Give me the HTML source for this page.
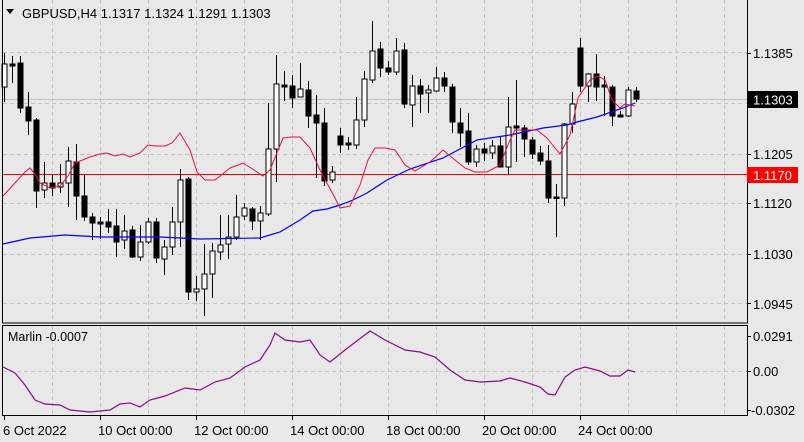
<!DOCTYPE html>
<html><head><meta charset="utf-8"><style>
html,body{margin:0;padding:0;background:#e8e8e8;}
body{width:804px;height:442px;overflow:hidden;position:relative;font-family:"Liberation Sans",sans-serif;}
svg{position:absolute;left:0;top:0}
</style></head><body>
<svg id="s" width="804" height="442" xmlns="http://www.w3.org/2000/svg" font-family="Liberation Sans, sans-serif" font-size="13">
<rect x="0" y="0" width="804" height="442" fill="#e8e8e8"/>
<g id="grid" stroke="#c4c4c4" stroke-dasharray="4,3" stroke-width="1"></g>
<line x1="2" y1="99.5" x2="747" y2="99.5" stroke="#c0c0c0"/>
<line x1="2" y1="174.5" x2="747" y2="174.5" stroke="#ff0000"/>
<g id="cd"></g>
<polyline id="blue" fill="none" stroke="#0000ff" stroke-width="1.2"/>
<polyline id="red" fill="none" stroke="#e8103c" stroke-width="1"/>
<polyline id="mar" fill="none" stroke="#8b0a8b" stroke-width="1.2"/>
<rect x="2.5" y="-1" width="745" height="324" fill="none" stroke="#000"/>
<rect x="2.5" y="325.5" width="745" height="90" fill="none" stroke="#000"/>
<path d="M6 9 L14 9 L10 14 Z" fill="#000"/>
<text x="22" y="18" fill="#000">GBPUSD,H4  1.1317 1.1324 1.1291 1.1303</text>
<text x="8" y="341" fill="#000" font-size="12.5">Marlin -0.0007</text>
<g fill="#000">
<text x="753" y="58">1.1385</text>
<text x="753" y="159">1.1205</text>
<text x="753" y="208">1.1120</text>
<text x="753" y="259">1.1030</text>
<text x="753" y="309">1.0945</text>
<text x="753" y="341">0.0291</text>
<text x="753" y="376">0.00</text>
<text x="751" y="415">-0.0302</text>
</g>
<rect x="747" y="91" width="51" height="17" fill="#000"/>
<text x="753" y="104.5" fill="#fff">1.1303</text>
<rect x="747" y="167" width="51" height="16" fill="#ff0000"/>
<text x="753" y="180" fill="#fff">1.1170</text>
<g id="tk" stroke="#000"></g>
<g fill="#000">
<text x="3" y="435">6 Oct 2022</text>
<text x="98" y="435">10 Oct 00:00</text>
<text x="194" y="435">12 Oct 00:00</text>
<text x="290" y="435">14 Oct 00:00</text>
<text x="386" y="435">18 Oct 00:00</text>
<text x="482" y="435">20 Oct 00:00</text>
<text x="578" y="435">24 Oct 00:00</text>
</g>
</svg>
<script>
var NS="http://www.w3.org/2000/svg";
function el(t,a,p){var e=document.createElementNS(NS,t);for(var k in a)e.setAttribute(k,a[k]);document.getElementById(p).appendChild(e);return e;}
var vx=[52,100,148,196,244,292,340,388,436,484,532,580,628,676,724];
vx.forEach(function(x){el('line',{x1:x+.5,y1:0,x2:x+.5,y2:323},'grid');el('line',{x1:x+.5,y1:326,x2:x+.5,y2:415},'grid');});
[52,103,154,203,254,303].forEach(function(y){el('line',{x1:3,y1:y+.5,x2:747,y2:y+.5},'grid');});
el('line',{x1:3,y1:371.5,x2:747,y2:371.5},'grid');
[53,99,154,203,254,303,336,371,410].forEach(function(y){el('line',{x1:747,y1:y+.5,x2:751,y2:y+.5},'tk');});
[4,100,196,292,388,484,580].forEach(function(x){el('line',{x1:x+.5,y1:415,x2:x+.5,y2:420},'tk');});
var C=[[87,53,102,64],[64,56,83,66],[63,56,113,108],[107,92,135,121],[120,118,208,191],[190,162,198,183],[183,175,196,188],[187,164,193,183],[183,147,207,161],[162,144,220,196],[196,175,221,217],[217,213,240,223],[222,217,239,224],[222,209,233,227],[226,209,257,242],[240,215,249,231],[230,226,258,257],[257,225,261,242],[242,218,244,222],[222,218,263,258],[259,240,275,247],[247,207,255,222],[222,169,247,180],[179,177,300,292],[292,276,301,289],[289,244,316,274],[274,243,298,251],[252,215,260,245],[244,215,259,237],[237,195,240,217],[216,203,220,208],[209,207,230,221],[221,206,240,213],[214,103,216,149],[149,55,182,84],[85,71,101,87],[86,75,108,98],[97,63,97,89],[90,81,128,116],[115,95,178,123],[123,108,186,181],[180,166,183,172],[136,128,153,145],[143,137,150,145],[145,97,149,120],[120,71,127,79],[80,21,83,51],[49,42,77,68],[68,61,75,72],[72,38,75,51],[50,43,108,104],[105,75,127,86],[86,79,113,94],[93,85,113,90],[91,67,92,78],[78,72,92,86],[87,84,133,122],[123,108,147,133],[131,113,165,162],[162,145,167,149],[149,143,161,153],[153,140,159,146],[146,136,167,167],[167,97,174,127],[126,80,162,128],[128,125,157,139],[140,137,159,154],[153,146,165,161],[161,145,203,198],[197,184,237,198],[198,123,206,124],[124,92,133,104],[48,38,92,86],[86,73,102,74],[74,54,101,87],[85,76,116,87],[87,85,126,116],[115,111,117,117],[116,87,117,90],[91,87,102,99]];
C.forEach(function(c,i){var x=4+8*i,o=c[0],h=c[1],l=c[2],cl=c[3];
 el('line',{x1:x+.5,y1:h,x2:x+.5,y2:l,stroke:'#000','stroke-width':1},'cd');
 var top=Math.min(o,cl),bh=Math.max(Math.abs(o-cl),1.5);
 var bull=cl<o;
 el('rect',{x:x-2,y:top,width:5,height:bh,fill:bull?'#fff':'#000',stroke:'#000','stroke-width':1},'cd');});
document.getElementById('blue').setAttribute('points',"3,244 30,238 65,235 100,237 160,237 200,239 260,238 280,232 300,220 313,211 327,209 340,205 353,200 367,193 387,180 410,169 443,158 477,140 510,135 543,128 567,125 577,122 597,117 623,108 635,103");
document.getElementById('red').setAttribute('points',"3,196 15,183 25,172 30,168 35,174 40,183 50,188 60,186 68,176 75,163 90,157 100,154 107,153 115,156 123,154 130,157 140,153 148,145 155,146 165,146 172,143 180,133 190,150 197,172 205,180 215,180 230,168 243,163 257,172 263,176 270,170 283,138 292,137 300,137 310,148 320,170 328,185 335,198 340,208 350,206 360,185 368,160 375,148 385,148 395,150 405,165 415,171 430,162 443,150 455,160 465,168 475,172 487,172 500,165 510,140 515,130 523,130 537,130 547,138 555,148 560,154 570,135 578,98 590,80 598,76 605,80 612,100 620,108 625,104 635,106");
document.getElementById('mar').setAttribute('points',"3,367 15,373 25,385 35,400 45,404 60,405 70,410 90,412 110,410 120,404 130,403 140,407 150,400 165,396 185,388 200,390 215,382 230,378 245,367 260,360 270,345 275,333 285,340 300,342 310,340 320,355 330,362 345,350 370,331 385,340 395,345 405,350 420,352 435,357 450,370 465,380 480,382 500,381 510,378 525,382 540,387 548,394 555,395 565,377 575,370 585,367 600,371 610,376 620,376 628,370 635,372");
</script>
</body></html>
